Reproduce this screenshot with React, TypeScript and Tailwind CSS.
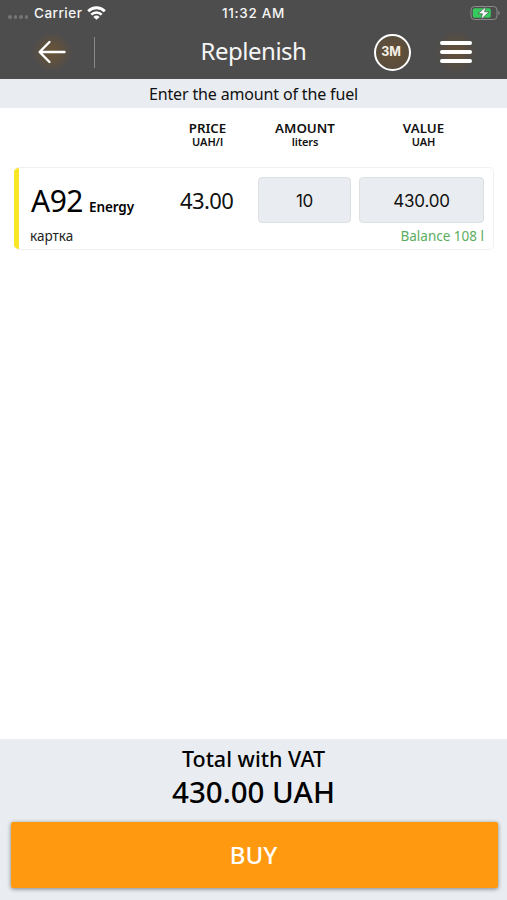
import React from 'react';

const columns = [
  { title: 'PRICE', unit: 'UAH/l', className: 'ml-[143px] w-[101px]' },
  { title: 'AMOUNT', unit: 'liters', className: 'w-[94px]' },
  { title: 'VALUE', unit: 'UAH', className: 'ml-[6px] w-[131px]' },
];

const StatusBar = () => (
  <div className="grid h-[26px] grid-cols-3 items-center font-['Inter',sans-serif] text-[13.5px] font-medium text-[#f5f5f5]">
    <div className="flex items-center pl-[8px]">
      <div className="mt-[8px] flex gap-[2px]">
        {[0, 1, 2, 3].map((dot) => (
          <span key={dot} className="h-[3.5px] w-[3.5px] rounded-full bg-[#757575]" />
        ))}
      </div>
      <span className="ml-[6px] tracking-[0.5px]">Carrier</span>
      <svg className="ml-[5px]" width="19" height="14" viewBox="0 0 19 14" fill="none" stroke="#fff">
        <path d="M1.2 5.2a11.8 11.8 0 0 1 16.6 0" strokeWidth="2.9" />
        <path d="M4.3 8.7a7.4 7.4 0 0 1 10.4 0" strokeWidth="2.6" />
        <path d="M9.5 13.8 6.4 10.9a4.4 4.4 0 0 1 6.2 0Z" fill="#fff" stroke="none" />
      </svg>
    </div>
    <div className="text-center tracking-[0.7px]">11:32 AM</div>
    <div className="flex justify-end pr-[6px]">
      <svg width="31" height="16" viewBox="0 0 31 16">
        <rect x="1" y="1.5" width="26" height="13" rx="3.5" fill="none" stroke="#8c8c8c" />
        <rect x="2.8" y="3.3" width="18" height="9.4" rx="1.8" fill="#35cb5c" />
        <path d="M28.4 5.8v4.4c1.8-.7 1.8-3.7 0-4.4Z" fill="#8c8c8c" />
        <path d="M15.8 1.8 8 8.8h4.4l-1.4 5.6 8.2-7.6h-4.6Z" fill="#fff" stroke="#4d4d4d" strokeWidth="0.7" />
      </svg>
    </div>
  </div>
);

const NavBar = () => (
  <div className="grid h-[52px] grid-cols-[1fr_auto_1fr] items-center">
    <div className="flex items-center pl-[32px]">
      <button className="flex h-[40px] w-[40px] items-center justify-center bg-[radial-gradient(circle,#6a5537_0%,#5c503f_38%,#4d4d4d_70%)]">
        <svg width="30" height="24" viewBox="0 0 30 24" fill="none" stroke="#fff" strokeWidth="2.4" strokeLinecap="round" strokeLinejoin="round">
          <path d="M27.5 12H3M12.5 2 2.6 12l9.9 10" />
        </svg>
      </button>
      <span className="ml-[22px] h-[31px] w-px bg-[#8a8a8a]" />
    </div>
    <h1 className="pb-[2px] text-[24px] leading-none tracking-[-0.5px] text-[#f5f5f5]">Replenish</h1>
    <div className="flex items-center justify-end pr-[26px]">
      <button className="flex h-[37px] w-[37px] items-center justify-center rounded-full border-2 border-white bg-[radial-gradient(circle,#665237,#554c40)] pr-[3px] pt-[1px] font-['Inter',sans-serif] text-[12.5px] font-bold text-[#f5f0e8]">
        3M
      </button>
      <button className="ml-[20px] flex h-[40px] w-[50px] flex-col items-center justify-center gap-[5px] bg-[radial-gradient(circle,#665237_0%,#584e40_35%,#4d4d4d_65%)]">
        <span className="h-[4px] w-[32px] rounded-full bg-white" />
        <span className="h-[4px] w-[32px] rounded-full bg-white" />
        <span className="h-[4px] w-[32px] rounded-full bg-white" />
      </button>
    </div>
  </div>
);

const FuelCard = () => (
  <div className="ml-[14px] mr-[13px] flex h-[83px] overflow-hidden rounded-[5px] border border-l-0 border-[#f0f0f0] bg-white">
    <div className="w-[5px] shrink-0 bg-[#f8e627]" />
    <div className="flex-1 pl-[12px] pr-[9px] pt-[9px]">
      <div className="flex h-[46px] items-center">
        <div className="flex w-[149px] shrink-0 items-baseline pt-[2px] text-black">
          <span className="text-[30px] leading-none tracking-[-0.5px]">A92</span>
          <span className="ml-[6px] text-[13.5px] font-semibold leading-none tracking-[-0.1px]">Energy</span>
        </div>
        <span className="w-[78px] shrink-0 text-[22px] leading-none tracking-[-0.6px] text-[#111]">43.00</span>
        <div className="flex h-[46px] w-[93px] shrink-0 items-center justify-center rounded-[4px] border border-[#dce0e3] bg-[#e9ecf0] pt-[4px] font-['Inter',sans-serif] text-[17px] tracking-[-0.2px] text-[#111]">
          10
        </div>
        <div className="ml-[8px] flex h-[46px] w-[125px] shrink-0 items-center justify-center rounded-[4px] border border-[#dce0e3] bg-[#e9ecf0] pt-[4px] font-['Inter',sans-serif] text-[17px] tracking-[-0.2px] text-[#111]">
          430.00
        </div>
      </div>
      <div className="-ml-px mt-[4px] flex justify-between text-[13.5px] leading-[18px]">
        <span className="text-[#222]">картка</span>
        <span className="text-[#5bad60]">Balance 108 l</span>
      </div>
    </div>
  </div>
);

const App = () => {
  return (
    <div className="flex h-screen w-full flex-col bg-white font-['Noto_Sans',sans-serif]">
      <header className="h-[79px] bg-[#4d4d4d]">
        <StatusBar />
        <NavBar />
      </header>
      <div className="flex h-[29px] items-center justify-center bg-[#e9ecf0] text-[16px] tracking-[-0.15px] text-[#111]">
        Enter the amount of the fuel
      </div>
      <main className="flex-1">
        <div className="flex h-[59px] pl-[14px] pt-[13px] text-center font-semibold text-[#111]">
          {columns.map((column) => (
            <div key={column.title} className={column.className}>
              <div className="text-[13.3px] leading-[15px]">{column.title}</div>
              <div className="text-[11px] leading-[12px] tracking-[-0.1px]">{column.unit}</div>
            </div>
          ))}
        </div>
        <FuelCard />
      </main>
      <footer className="h-[161px] bg-[#e9ecf0] pl-[11px] pr-[9px] pt-[6px] text-center font-medium text-black">
        <div className="-ml-[2px] text-[21.5px] leading-[28px]">Total with VAT</div>
        <div className="-ml-[2px] text-[29.5px] leading-[38px]">430.00 UAH</div>
        <button className="mt-[11px] h-[66px] w-full rounded-[2px] bg-[#ff9a10] pr-[2px] text-[24px] text-white shadow-[0_1px_4px_rgba(0,0,0,0.45)]">
          BUY
        </button>
      </footer>
    </div>
  );
};

export default App;
